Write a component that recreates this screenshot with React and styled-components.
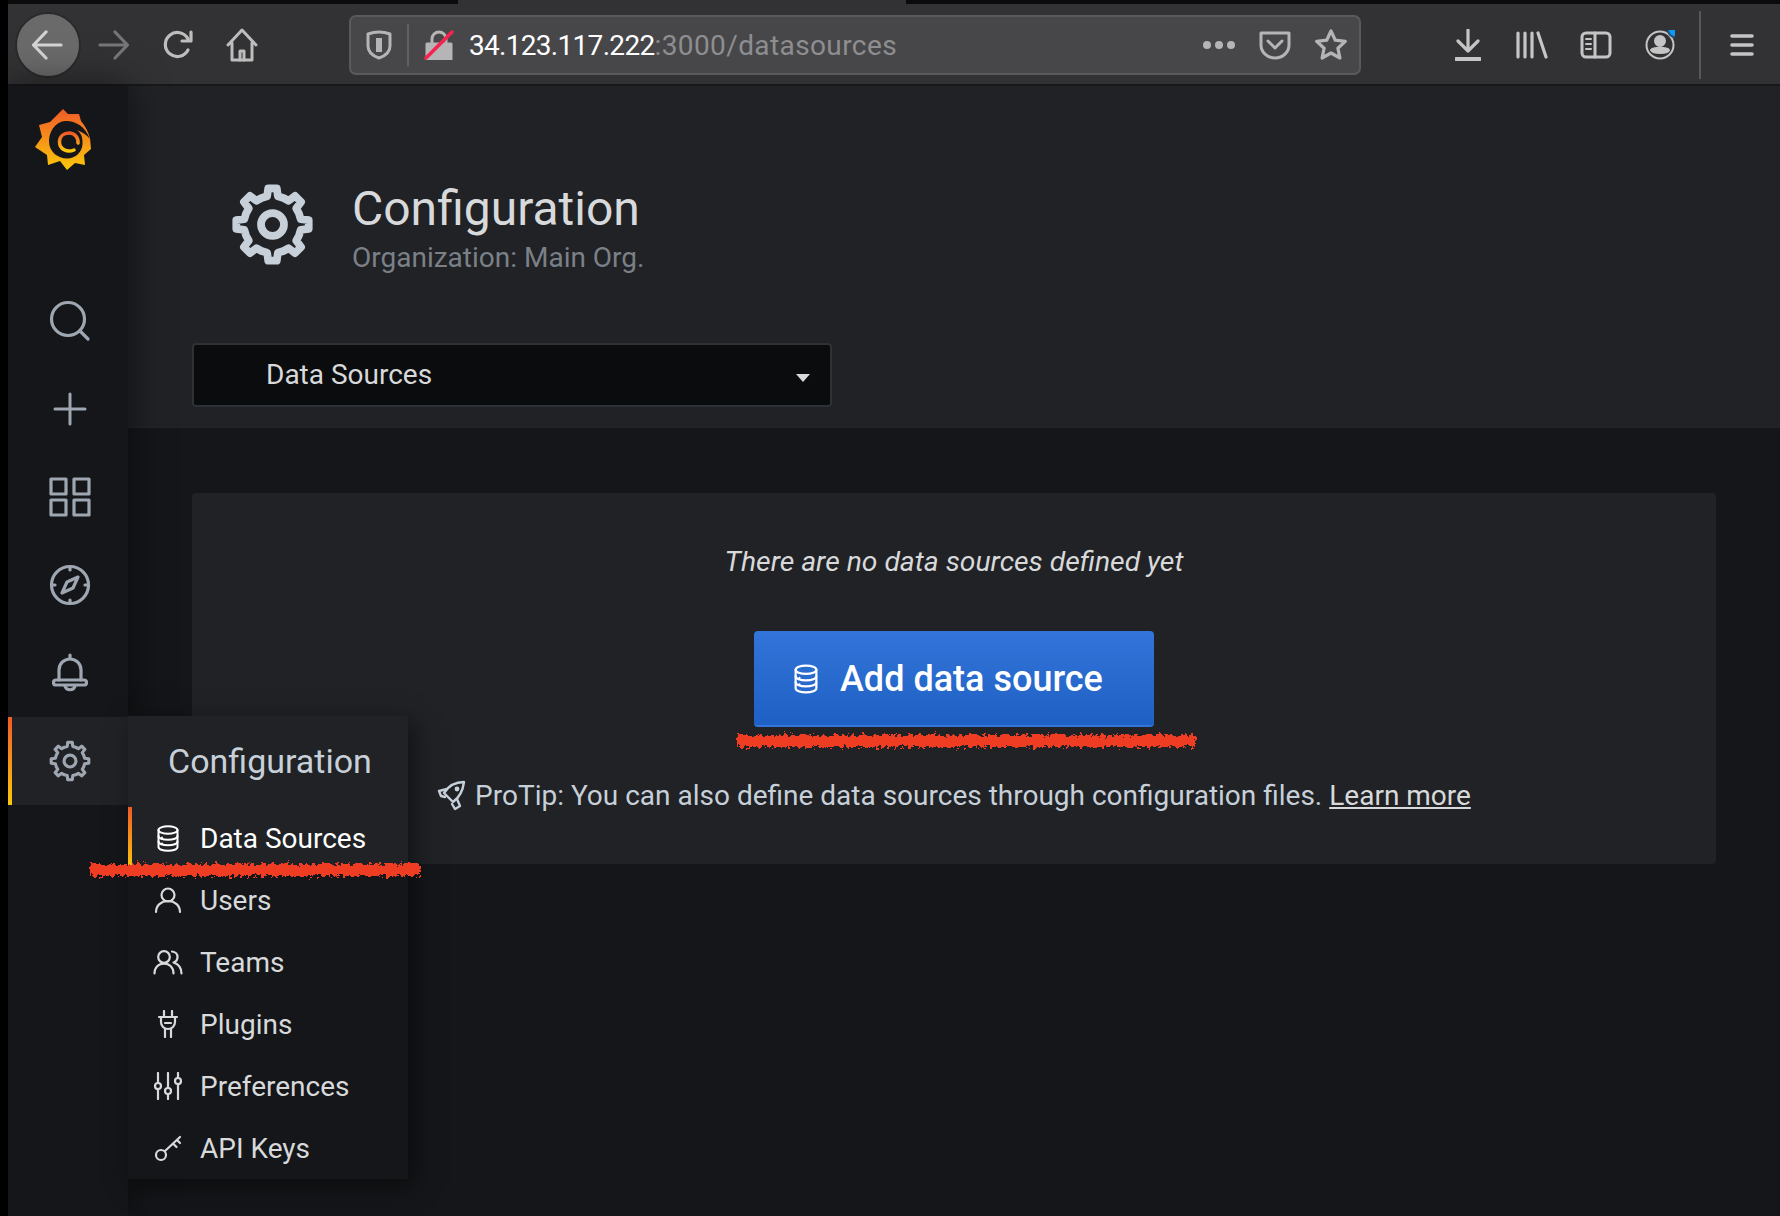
import React from "react";
import styled, { createGlobalStyle } from "styled-components";

const GlobalStyle = createGlobalStyle`
  html, body {
    margin: 0;
    padding: 0;
    background: #000;
  }
  * {
    box-sizing: border-box;
  }
`;

const Page = styled.div`
  width: 1780px;
  height: 1216px;
  padding-left: 8px;
  overflow: hidden;
  background: #000;
  font-family: Roboto, "Liberation Sans", sans-serif;
  display: flex;
  flex-direction: column;
`;
const TabStrip = styled.div`
  height: 4px;
  flex: none;
  display: flex;
  background: #0b0b0c;
`;
const ActiveTab = styled.div`
  width: 448px;
  margin-left: 450px;
  background: #323234;
`;
const Toolbar = styled.div`
  height: 82px;
  flex: none;
  display: flex;
  align-items: center;
  padding: 1px 0 0 7px;
  background: #323234;
  border-bottom: 2px solid #17181a;
`;
const BackButton = styled.div`
  width: 66px;
  height: 66px;
  flex: none;
  border-radius: 50%;
  background: #6a6a6b;
  border: 2px solid #2a2a2c;
  display: flex;
  align-items: center;
  justify-content: center;
`;
const ToolSlot = styled.div`
  width: ${p => p.$w || 64}px;
  flex: none;
  display: flex;
  align-items: center;
  justify-content: center;
  margin-left: ${p => p.$ml || 0}px;
`;
const UrlBar = styled.div`
  width: 1012px;
  height: 60px;
  margin-left: 75px;
  flex: none;
  display: flex;
  align-items: center;
  background: #474749;
  border: 2px solid #5a5a5c;
  border-radius: 7px;
`;
const UrlDivider = styled.div`
  width: 2px;
  height: 42px;
  flex: none;
  background: #5f6063;
`;
const UrlText = styled.div`
  flex: 1;
  padding-top: 2px;
  font-size: 28px;
  letter-spacing: 0.4px;
  color: #8e8e90;
  white-space: nowrap;
  b {
    font-weight: 400;
    letter-spacing: -0.7px;
    color: #fff;
  }
`;
const ToolDivider = styled.div`
  width: 2px;
  height: 68px;
  flex: none;
  margin-left: 7px;
  background: #58585a;
`;

const Main = styled.div`
  flex: 1;
  display: flex;
  min-height: 0;
  position: relative;
`;
const Sidebar = styled.nav`
  width: 120px;
  flex: none;
  background: #141619;
  box-shadow: 0 0 36px rgba(0, 0, 0, 0.55);
  position: relative;
  z-index: 2;
`;
const LogoBlock = styled.div`
  height: 191px;
  padding: 23px 0 0 27px;
`;
const SideItem = styled.div`
  height: 88px;
  display: flex;
  align-items: center;
  justify-content: center;
  color: #9ea6b1;
  background: ${p => (p.$active ? "#202226" : "transparent")};
  border-left: 4px solid transparent;
  border-image: ${p =>
    p.$active ? "linear-gradient(180deg, #f05a28, #fbca0a) 1" : "none"};
`;
const Flyout = styled.div`
  position: absolute;
  left: 120px;
  top: 630px;
  width: 280px;
  z-index: 3;
  background: #141619;
  box-shadow: 6px 6px 24px rgba(0, 0, 0, 0.5);
`;
const FlyoutHeader = styled.div`
  height: 91px;
  padding: 0 0 2px 40px;
  display: flex;
  align-items: center;
  background: #202226;
  color: #c7d0d9;
  font-size: 34px;
`;
const FlyoutItem = styled.div`
  height: 62px;
  display: flex;
  align-items: center;
  font-size: 28px;
  color: ${p => (p.$active ? "#fff" : "#d8d9da")};
  background: ${p => (p.$active ? "#202226" : "transparent")};
  border-left: 4px solid transparent;
  border-image: ${p =>
    p.$active ? "linear-gradient(180deg, #f05a28, #fbca0a) 1" : "none"};
`;
const FlyoutIcon = styled.span`
  width: 68px;
  flex: none;
  display: flex;
  justify-content: center;
  padding-left: 4px;
`;

const Content = styled.div`
  flex: 1;
  display: flex;
  flex-direction: column;
  min-width: 0;
  background: #141619;
`;
const PageHeader = styled.header`
  height: 342px;
  flex: none;
  padding: 98px 64px 0;
  background: #202226;
  border-bottom: 1px solid #232529;
`;
const TitleRow = styled.div`
  height: 80px;
  display: flex;
  align-items: center;
  gap: 39px;
  padding-left: 40px;
  color: #c7d0d9;
`;
const TitleText = styled.div`
  display: flex;
  flex-direction: column;
  padding-top: 12px;
`;
const Title = styled.h1`
  margin: 0;
  font-size: 48px;
  line-height: 56px;
  font-weight: 400;
  color: #d8d9da;
`;
const SubTitle = styled.div`
  font-size: 28px;
  line-height: 42px;
  color: #7b8087;
`;
const NavSelect = styled.div`
  width: 640px;
  height: 64px;
  margin-top: 79px;
  padding: 0 20px 0 72px;
  display: flex;
  align-items: center;
  justify-content: space-between;
  background: #0b0c0e;
  border: 2px solid #2c3235;
  border-radius: 4px;
  font-size: 28px;
  line-height: 60px;
  color: #d8d9da;
`;
const Caret = styled.span`
  width: 0;
  height: 0;
  margin-top: 6px;
  border-left: 7.5px solid transparent;
  border-right: 7.5px solid transparent;
  border-top: 8px solid #d8d9da;
`;
const Body = styled.main`
  flex: 1;
  padding: 65px 64px 0;
`;
const Panel = styled.section`
  padding: 49px 0 49px;
  display: flex;
  flex-direction: column;
  align-items: center;
  background: #202226;
  border-radius: 4px;
`;
const EmptyText = styled.p`
  margin: 0 0 49px;
  font-size: 28.3px;
  line-height: 40px;
  font-style: italic;
  color: #d8d9da;
`;
const ButtonWrap = styled.div`
  position: relative;
`;
const AddButton = styled.button`
  width: 400px;
  height: 96px;
  padding: 2px 0 0 40px;
  display: flex;
  align-items: center;
  gap: 22px;
  border: none;
  border-bottom: 2px solid #3274d9;
  border-radius: 4px;
  background: linear-gradient(180deg, #3274d9, #1f60c4);
  color: #fff;
  font-family: inherit;
  font-size: 36px;
  font-weight: 500;
`;
const ProTip = styled.p`
  margin: 48px 0 0;
  height: 40px;
  display: flex;
  align-items: center;
  gap: 7px;
  font-size: 28px;
  color: #c7d0d9;
  svg {
    margin-right: 1px;
  }
  a {
    color: #d8d9da;
    text-decoration: underline;
  }
`;
const Scribble = styled.svg`
  position: absolute;
  left: ${p => p.$left}px;
  top: ${p => p.$top}px;
  overflow: visible;
  pointer-events: none;
  z-index: 4;
`;

const gearPath = (cx, cy, outer, inner, teeth) => {
  const pts = [];
  const step = (Math.PI * 2) / teeth;
  for (let i = 0; i < teeth; i++) {
    const a = i * step - Math.PI / 2;
    [
      [-0.5, inner],
      [-0.24, inner],
      [-0.15, outer],
      [0.15, outer],
      [0.24, inner],
    ].forEach(([o, r]) => {
      pts.push([cx + Math.cos(a + o * step) * r, cy + Math.sin(a + o * step) * r]);
    });
  }
  return "M" + pts.map(p => p[0].toFixed(2) + " " + p[1].toFixed(2)).join("L") + "Z";
};

const Gear = ({ size, weight = 2 }) => (
  <svg width={size} height={size} viewBox="0 0 24 24" fill="none" stroke="currentColor" strokeWidth={weight} strokeLinejoin="round">
    <path d={gearPath(12, 12, 10.8, 8.5, 8)} />
    <circle cx="12" cy="12" r="3.4" />
  </svg>
);

const Line = ({ w, h, children, sw = 2, color = "currentColor", vb }) => (
  <svg width={w} height={h} viewBox={vb || `0 0 ${w} ${h}`} fill="none" stroke={color} strokeWidth={sw} strokeLinecap="round" strokeLinejoin="round">
    {children}
  </svg>
);

const GrafanaLogo = () => (
  <svg width="56" height="62" viewBox="0 0 56 62">
    <defs>
      <linearGradient id="grafanaGrad" x1="0" y1="0" x2="0" y2="1">
        <stop offset="0" stopColor="#f05a28" />
        <stop offset="1" stopColor="#fbca0a" />
      </linearGradient>
    </defs>
    <path
      fill="url(#grafanaGrad)"
      d="M28 0 L33 5 L44 5 L46 12 Q52 19 55 29 L56 40 L49 46 L50 56 L40 54 L32 61 L25 52 L13 56 L12 46 L0 38 L7 28 L4 16 L15 13 Z"
    />
    <path
      fill="#141619"
      d="M55 30 C50 17 40 11.500 30 12 C19 13 14 24 14 32 C14 43 23 49.500 32 49.500 C41 49.500 47 43 47.500 35 C47.800 28 46 24 42 21 C47 23 52 26 55 30 Z"
    />
    <path
      fill="none"
      stroke="url(#grafanaGrad)"
      strokeWidth="3.500"
      strokeLinecap="round"
      d="M39 41 C32 44 24.500 40 24.500 33 C24.500 27 29 24 34 24 C40 24 43.500 29 43 34"
    />
  </svg>
);

const DbIcon = ({ w = 22, h = 27, sw = 2 }) => (
  <Line w={w} h={h} vb="0 0 22 27" sw={sw} color="#fff">
    <ellipse cx="11" cy="5" rx="9.500" ry="3.800" />
    <path d="M1.500 5v17c0 2.200 4.200 3.800 9.500 3.800s9.500-1.600 9.500-3.800V5" />
    <path d="M1.500 11c0 2.200 4.200 3.800 9.500 3.800s9.500-1.600 9.500-3.800" />
    <path d="M1.500 16.500c0 2.200 4.200 3.800 9.500 3.800s9.500-1.600 9.500-3.800" />
    <path d="M5 12.500v.1M5 18.500v.1" />
  </Line>
);

const menu = [
  {
    label: "Users",
    icon: (
      <Line w={28} h={28} sw={2.200}>
        <circle cx="14" cy="9" r="6.500" />
        <path d="M2 26c0-6.500 5-11 12-11s12 4.500 12 11" />
      </Line>
    ),
  },
  {
    label: "Teams",
    icon: (
      <Line w={30} h={26} sw={2.200}>
        <circle cx="11" cy="8" r="5.800" />
        <path d="M1.500 24.500c0-6 4-9.800 9.500-9.800s9.500 3.800 9.500 9.800" />
        <path d="M19 2.500c3.500.3 5.500 2.800 5.500 5.500s-1.600 4.800-4 5.500c4.500 1.500 8 5 8 11" />
      </Line>
    ),
  },
  {
    label: "Plugins",
    icon: (
      <Line w={22} h={28} sw={2.200}>
        <path d="M7 1v6M15 1v6M2 7h18M4 7v5c0 4 3 7 7 7s7-3 7-7V7" />
        <path d="M8 19v8M14 19v8M8 13h6" />
      </Line>
    ),
  },
  {
    label: "Preferences",
    icon: (
      <Line w={28} h={28} sw={2.200}>
        <path d="M4 1v10M4 17v10M14 1v15M14 22v5M24 1v5M24 12v15" />
        <circle cx="4" cy="14" r="3" />
        <circle cx="14" cy="19" r="3" />
        <circle cx="24" cy="9" r="3" />
      </Line>
    ),
  },
  {
    label: "API Keys",
    icon: (
      <Line w={28} h={28} sw={2.200}>
        <circle cx="7" cy="21" r="5" />
        <path d="M11 17L26 3M19 9.500l3.500 3.500M23 6l3 3" />
      </Line>
    ),
  },
];

const Rough = ({ id, width, left, top }) => (
  <Scribble $left={left} $top={top} width={width} height="14">
    <filter id={id} x="-3%" y="-80%" width="106%" height="260%">
      <feTurbulence type="fractalNoise" baseFrequency="0.28" numOctaves="4" seed="7" />
      <feDisplacementMap in="SourceGraphic" scale="10" />
    </filter>
    <rect x="0" y="1" width={width} height="12" fill="#ee3d20" filter={`url(#${id})`} />
  </Scribble>
);

const App = () => {
  return (
    <Page>
      <GlobalStyle />
      <TabStrip>
        <ActiveTab />
      </TabStrip>
      <Toolbar>
        <BackButton>
          <Line w={32} h={32} sw={3.200} color="#d4d4d5">
            <path d="M29 16H2M14 3L1.500 16L14 29" />
          </Line>
        </BackButton>
        <ToolSlot $ml={1}>
          <Line w={32} h={32} sw={3.200} color="#77777a">
            <path d="M2 16h27M17 3l12.500 13L17 29" />
          </Line>
        </ToolSlot>
        <ToolSlot>
          <Line w={32} h={32} sw={3.200} color="#bdbdbe">
            <path d="M26 21a12 12 0 1 1 0-11" />
            <path d="M29 3v9h-9" />
          </Line>
        </ToolSlot>
        <ToolSlot>
          <Line w={32} h={34} sw={3} color="#bdbdbe">
            <path d="M2 17L16 2l14 15M6 15v17h20V15" />
            <path d="M14 32v-9h4v9" />
          </Line>
        </ToolSlot>
        <UrlBar>
          <ToolSlot $w={56}>
            <Line w={26} h={30} sw={3} color="#b5b5b6">
              <path d="M2 4c7-2.500 15-2.500 22 0v12c0 6-5 10-11 12C7 26 2 22 2 16z" />
              <path d="M13 8v14" strokeWidth={6} strokeLinecap="butt" />
            </Line>
          </ToolSlot>
          <UrlDivider />
          <ToolSlot $w={60}>
            <Line w={30} h={30} sw={3} color="#b5b5b6">
              <path d="M3 14h24v15H3z" fill="#b5b5b6" />
              <path d="M8 14V9a7 7 0 0 1 14 0v5" />
              <path d="M2 28L28 2" stroke="#f5234f" strokeWidth={3.500} />
            </Line>
          </ToolSlot>
          <UrlText>
            <b>34.123.117.222</b>:3000/datasources
          </UrlText>
          <ToolSlot $w={56}>
            <Line w={34} h={8} sw={0} color="#b5b5b6">
              <circle cx="5" cy="4" r="4" fill="#b5b5b6" />
              <circle cx="17" cy="4" r="4" fill="#b5b5b6" />
              <circle cx="29" cy="4" r="4" fill="#b5b5b6" />
            </Line>
          </ToolSlot>
          <ToolSlot $w={56}>
            <Line w={32} h={30} sw={3} color="#b5b5b6">
              <path d="M2 3h28v12c0 7-6 13-14 13S2 22 2 15z" />
              <path d="M9 11l7 7 7-7" />
            </Line>
          </ToolSlot>
          <ToolSlot $w={56}>
            <Line w={32} h={32} sw={3.200} color="#b5b5b6">
              <path d="M16 2l4.300 9.200 10 1.200-7.400 6.800 2 9.800-8.900-5-8.900 5 2-9.800-7.400-6.800 10-1.200z" />
            </Line>
          </ToolSlot>
        </UrlBar>
        <ToolSlot $ml={75}>
          <Line w={26} h={32} sw={3.200} color="#c5c5c6">
            <path d="M13 1v21M3 12l10 10 10-10" />
            <path d="M1 30h24" strokeWidth={4} />
          </Line>
        </ToolSlot>
        <ToolSlot>
          <Line w={32} h={28} sw={3.200} color="#c5c5c6">
            <path d="M2 2v24M9 2v24M16 2v24M22 2l8 24" />
          </Line>
        </ToolSlot>
        <ToolSlot>
          <Line w={32} h={28} sw={3} color="#c5c5c6">
            <rect x="2" y="2" width="28" height="24" rx="4" />
            <path d="M15 2v24" />
            <path d="M6 8h5M6 13h5M6 18h5" strokeWidth={2} />
          </Line>
        </ToolSlot>
        <ToolSlot>
          <Line w={30} h={30} sw={2} color="#c5c5c6">
            <circle cx="15" cy="15" r="13.500" />
            <circle cx="15" cy="11" r="5" fill="#c5c5c6" />
            <path d="M6 20c2-3 16-3 18 0c-1 4-16 4-18 0z" fill="#c5c5c6" />
            <circle cx="30" cy="0" r="7" fill="#0a9df2" stroke="#25507a" strokeWidth={2} />
          </Line>
        </ToolSlot>
        <ToolDivider />
        <ToolSlot $ml={9}>
          <Line w={24} h={24} sw={3.600} color="#c5c5c6">
            <path d="M2 3h20M2 12h20M2 21h20" />
          </Line>
        </ToolSlot>
      </Toolbar>
      <Main>
        <Sidebar>
          <LogoBlock>
            <GrafanaLogo />
          </LogoBlock>
          <SideItem>
            <Line w={42} h={42} sw={3.200}>
              <circle cx="19" cy="19" r="16.500" />
              <path d="M31 31l8 8" />
            </Line>
          </SideItem>
          <SideItem>
            <Line w={34} h={34} sw={3}>
              <path d="M17 2v30M2 17h30" />
            </Line>
          </SideItem>
          <SideItem>
            <Line w={42} h={40} sw={3.200}>
              <rect x="2" y="2" width="15" height="15" />
              <rect x="25" y="2" width="15" height="15" />
              <rect x="2" y="23" width="15" height="15" />
              <rect x="25" y="23" width="15" height="15" />
            </Line>
          </SideItem>
          <SideItem>
            <Line w={42} h={42} sw={3.200}>
              <circle cx="21" cy="21" r="18.500" />
              <path d="M21 3v3M21 36v3M3 21h3M36 21h3" />
              <path d="M29 13l-11 5-5 11 11-5z" />
            </Line>
          </SideItem>
          <SideItem>
            <Line w={36} h={40} sw={3.200}>
              <path d="M18 2v4M7 27V17a11 11 0 0 1 22 0v10" />
              <path d="M4 27h28a1.500 1.500 0 0 1 0 5H4a1.500 1.500 0 0 1 0-5z" />
              <path d="M13 33c1 5 9 5 10 0" />
            </Line>
          </SideItem>
          <SideItem $active>
            <Gear size={42} weight={1.800} />
          </SideItem>
        </Sidebar>
        <Flyout>
          <FlyoutHeader>Configuration</FlyoutHeader>
          <FlyoutItem $active>
            <FlyoutIcon>
              <DbIcon />
            </FlyoutIcon>
            Data Sources
          </FlyoutItem>
          {menu.map(item => (
            <FlyoutItem key={item.label}>
              <FlyoutIcon>{item.icon}</FlyoutIcon>
              {item.label}
            </FlyoutItem>
          ))}
          <Rough id="flyoutRough" width={330} left={-38} top={147} />
        </Flyout>
        <Content>
          <PageHeader>
            <TitleRow>
              <Gear size={81} weight={2.300} />
              <TitleText>
                <Title>Configuration</Title>
                <SubTitle>Organization: Main Org.</SubTitle>
              </TitleText>
            </TitleRow>
            <NavSelect>
              Data Sources
              <Caret />
            </NavSelect>
          </PageHeader>
          <Body>
            <Panel>
              <EmptyText>There are no data sources defined yet</EmptyText>
              <ButtonWrap>
                <AddButton>
                  <DbIcon w={24} h={30} />
                  Add data source
                </AddButton>
                <Rough id="buttonRough" width={458} left={-17} top={103} />
              </ButtonWrap>
              <ProTip>
                <Line w={30} h={32} vb="8 5 30 32" sw={2.400}>
                  <path d="M35 8C27 8 20 11 15 19L24 28C31 23 34 16 35 8Z" />
                  <path d="M18 15L10 17L12 22L16 23" />
                  <path d="M28 25L31 32L26 35L23 30" />
                  <circle cx="28" cy="15" r="1.200" />
                </Line>
                ProTip: You can also define data sources through configuration files.
                <a>Learn more</a>
              </ProTip>
            </Panel>
          </Body>
        </Content>
      </Main>
    </Page>
  );
};

export default App;
